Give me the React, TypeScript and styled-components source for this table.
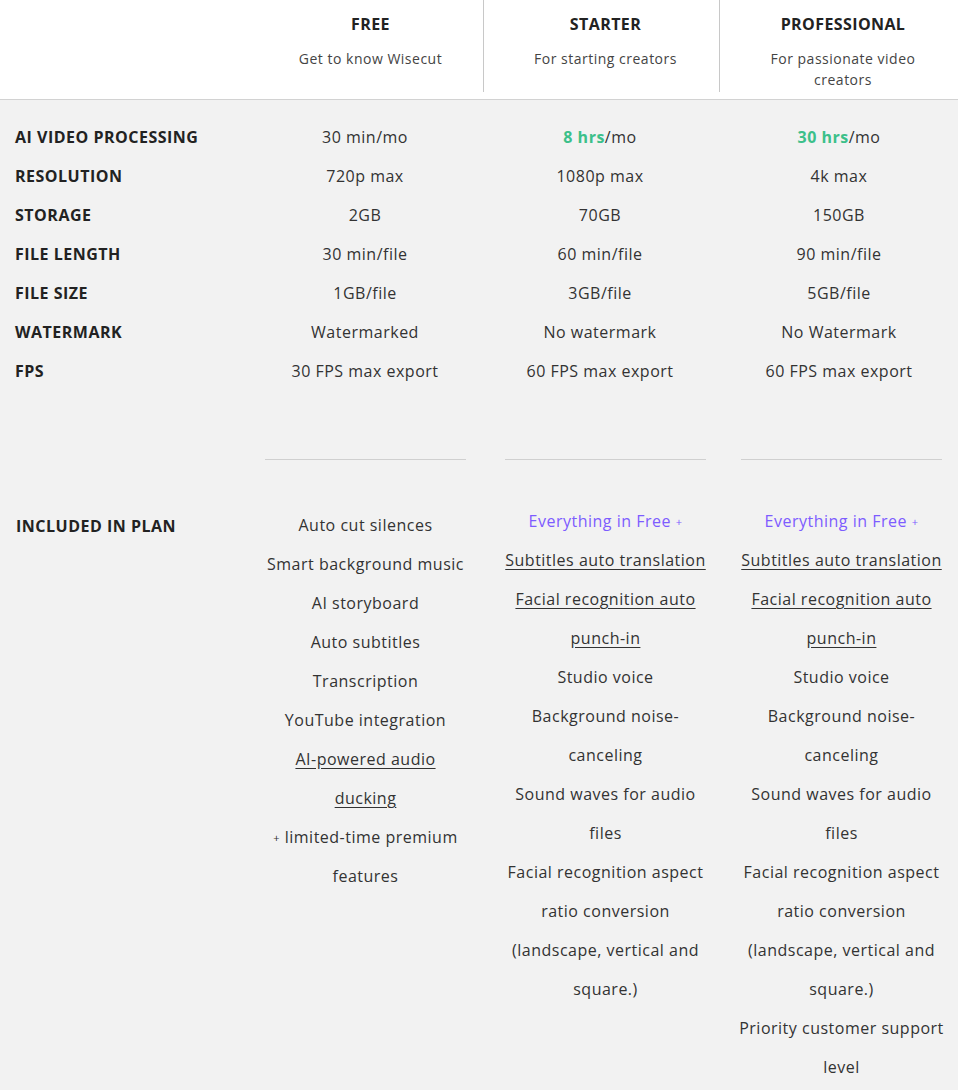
import React from 'react';
import styled, { createGlobalStyle } from 'styled-components';

const GlobalStyle = createGlobalStyle`
    html, body {
        margin: 0;
        padding: 0;
        background: #f2f2f2;
    }
    body {
        font-family: "Open Sans", "Liberation Sans", sans-serif;
        color: #333;
        letter-spacing: 0.5px;
    }
`;

const Page = styled.div`
    width: 958px;
    min-height: 1090px;
    background: #f2f2f2;
`;

const Header = styled.div`
    display: grid;
    grid-template-columns: 250px 233px 236px 239px;
    height: 99px;
    background: #fff;
    border-bottom: 1px solid #d2d2d2;
`;

const HeadCell = styled.div<{ $divider?: boolean }>`
    display: flex;
    flex-direction: column;
    align-items: center;
    padding: 13px 12px 0 20px;
    height: 92px;
    box-sizing: border-box;
    border-left: ${p => (p.$divider ? '1px solid #c8c8c8' : 'none')};
    text-align: center;
`;

const PlanName = styled.div`
    font-weight: 700;
    font-size: 16px;
    line-height: 22px;
    color: #222;
    letter-spacing: 0.4px;
`;

const PlanDesc = styled.div`
    margin-top: 13px;
    max-width: 165px;
    font-size: 14px;
    line-height: 21px;
    color: #444;
`;

const Specs = styled.div`
    display: grid;
    grid-template-columns: 250px 230px 240px 238px;
    padding-top: 18px;
`;

const Label = styled.div`
    padding-left: 15px;
    font-weight: 700;
    font-size: 16px;
    line-height: 39px;
    color: #222;
    white-space: nowrap;
`;

const Value = styled.div`
    text-align: center;
    font-size: 16px;
    line-height: 39px;
    color: #333;
`;

const Hours = styled.span`
    font-weight: 700;
    color: #3cc08a;
`;

const Included = styled.div`
    display: grid;
    grid-template-columns: 250px 231px 249px 223px;
    margin-top: 68px;
`;

const IncludedLabel = styled.div`
    padding: 52px 0 0 16px;
    font-weight: 700;
    font-size: 16px;
    line-height: 30px;
    color: #222;
`;

const PlanColumn = styled.div`
    display: flex;
    flex-direction: column;
    align-items: center;
`;

const Rule = styled.div`
    width: 201px;
    height: 1px;
    background: #d0d0d0;
`;

const Features = styled.ul<{ $top: number; $width: number }>`
    list-style: none;
    margin: ${p => p.$top}px 0 0;
    padding: 0;
    width: ${p => p.$width}px;
    text-align: center;
`;

const Feature = styled.li<{ $accent?: boolean; $link?: boolean }>`
    font-size: 16px;
    line-height: 39px;
    color: ${p => (p.$accent ? '#7d5cff' : '#333')};
    text-decoration: ${p => (p.$link ? 'underline' : 'none')};
    text-underline-offset: 3px;
`;

const Plus = styled.span`
    font-size: 11px;
    vertical-align: 1px;
`;

type Item = { text: React.ReactNode; accent?: boolean; link?: boolean };

const specs: { label: string; values: React.ReactNode[] }[] = [
    {
        label: 'AI VIDEO PROCESSING',
        values: [
            '30 min/mo',
            <><Hours>8 hrs</Hours>/mo</>,
            <><Hours>30 hrs</Hours>/mo</>,
        ],
    },
    { label: 'RESOLUTION', values: ['720p max', '1080p max', '4k max'] },
    { label: 'STORAGE', values: ['2GB', '70GB', '150GB'] },
    { label: 'FILE LENGTH', values: ['30 min/file', '60 min/file', '90 min/file'] },
    { label: 'FILE SIZE', values: ['1GB/file', '3GB/file', '5GB/file'] },
    { label: 'WATERMARK', values: ['Watermarked', 'No watermark', 'No Watermark'] },
    { label: 'FPS', values: ['30 FPS max export', '60 FPS max export', '60 FPS max export'] },
];

const freeItems: Item[] = [
    { text: 'Auto cut silences' },
    { text: 'Smart background music' },
    { text: 'AI storyboard' },
    { text: 'Auto subtitles' },
    { text: 'Transcription' },
    { text: 'YouTube integration' },
    { text: 'AI-powered audio ducking', link: true },
    { text: <><Plus>+</Plus> limited-time premium features</> },
];

const paidItems: Item[] = [
    { text: <>Everything in Free <Plus>+</Plus></>, accent: true },
    { text: 'Subtitles auto translation', link: true },
    { text: 'Facial recognition auto punch-in', link: true },
    { text: 'Studio voice' },
    { text: 'Background noise-canceling' },
    { text: 'Sound waves for audio files' },
    { text: 'Facial recognition aspect ratio conversion (landscape, vertical and square.)' },
];

const proItems: Item[] = [
    ...paidItems,
    { text: 'Priority customer support level' },
];

const plans = [
    { name: 'FREE', desc: 'Get to know Wisecut' },
    { name: 'STARTER', desc: 'For starting creators' },
    { name: 'PROFESSIONAL', desc: 'For passionate video creators' },
];

const App: React.FC = () => {
    const columns: { items: Item[]; top: number; width: number }[] = [
        { items: freeItems, top: 46, width: 201 },
        { items: paidItems, top: 42, width: 201 },
        { items: proItems, top: 42, width: 212 },
    ];

    return (
        <Page>
            <GlobalStyle />
            <Header>
                <div />
                {plans.map((plan, i) => (
                    <HeadCell key={plan.name} $divider={i > 0}>
                        <PlanName>{plan.name}</PlanName>
                        <PlanDesc>{plan.desc}</PlanDesc>
                    </HeadCell>
                ))}
            </Header>

            <Specs>
                {specs.map(row => (
                    <React.Fragment key={row.label}>
                        <Label>{row.label}</Label>
                        {row.values.map((v, i) => (
                            <Value key={i}>{v}</Value>
                        ))}
                    </React.Fragment>
                ))}
            </Specs>

            <Included>
                <IncludedLabel>INCLUDED IN PLAN</IncludedLabel>
                {columns.map((col, i) => (
                    <PlanColumn key={i}>
                        <Rule />
                        <Features $top={col.top} $width={col.width}>
                            {col.items.map((item, j) => (
                                <Feature key={j} $accent={item.accent} $link={item.link}>
                                    {item.text}
                                </Feature>
                            ))}
                        </Features>
                    </PlanColumn>
                ))}
            </Included>
        </Page>
    );
};

export default App;
